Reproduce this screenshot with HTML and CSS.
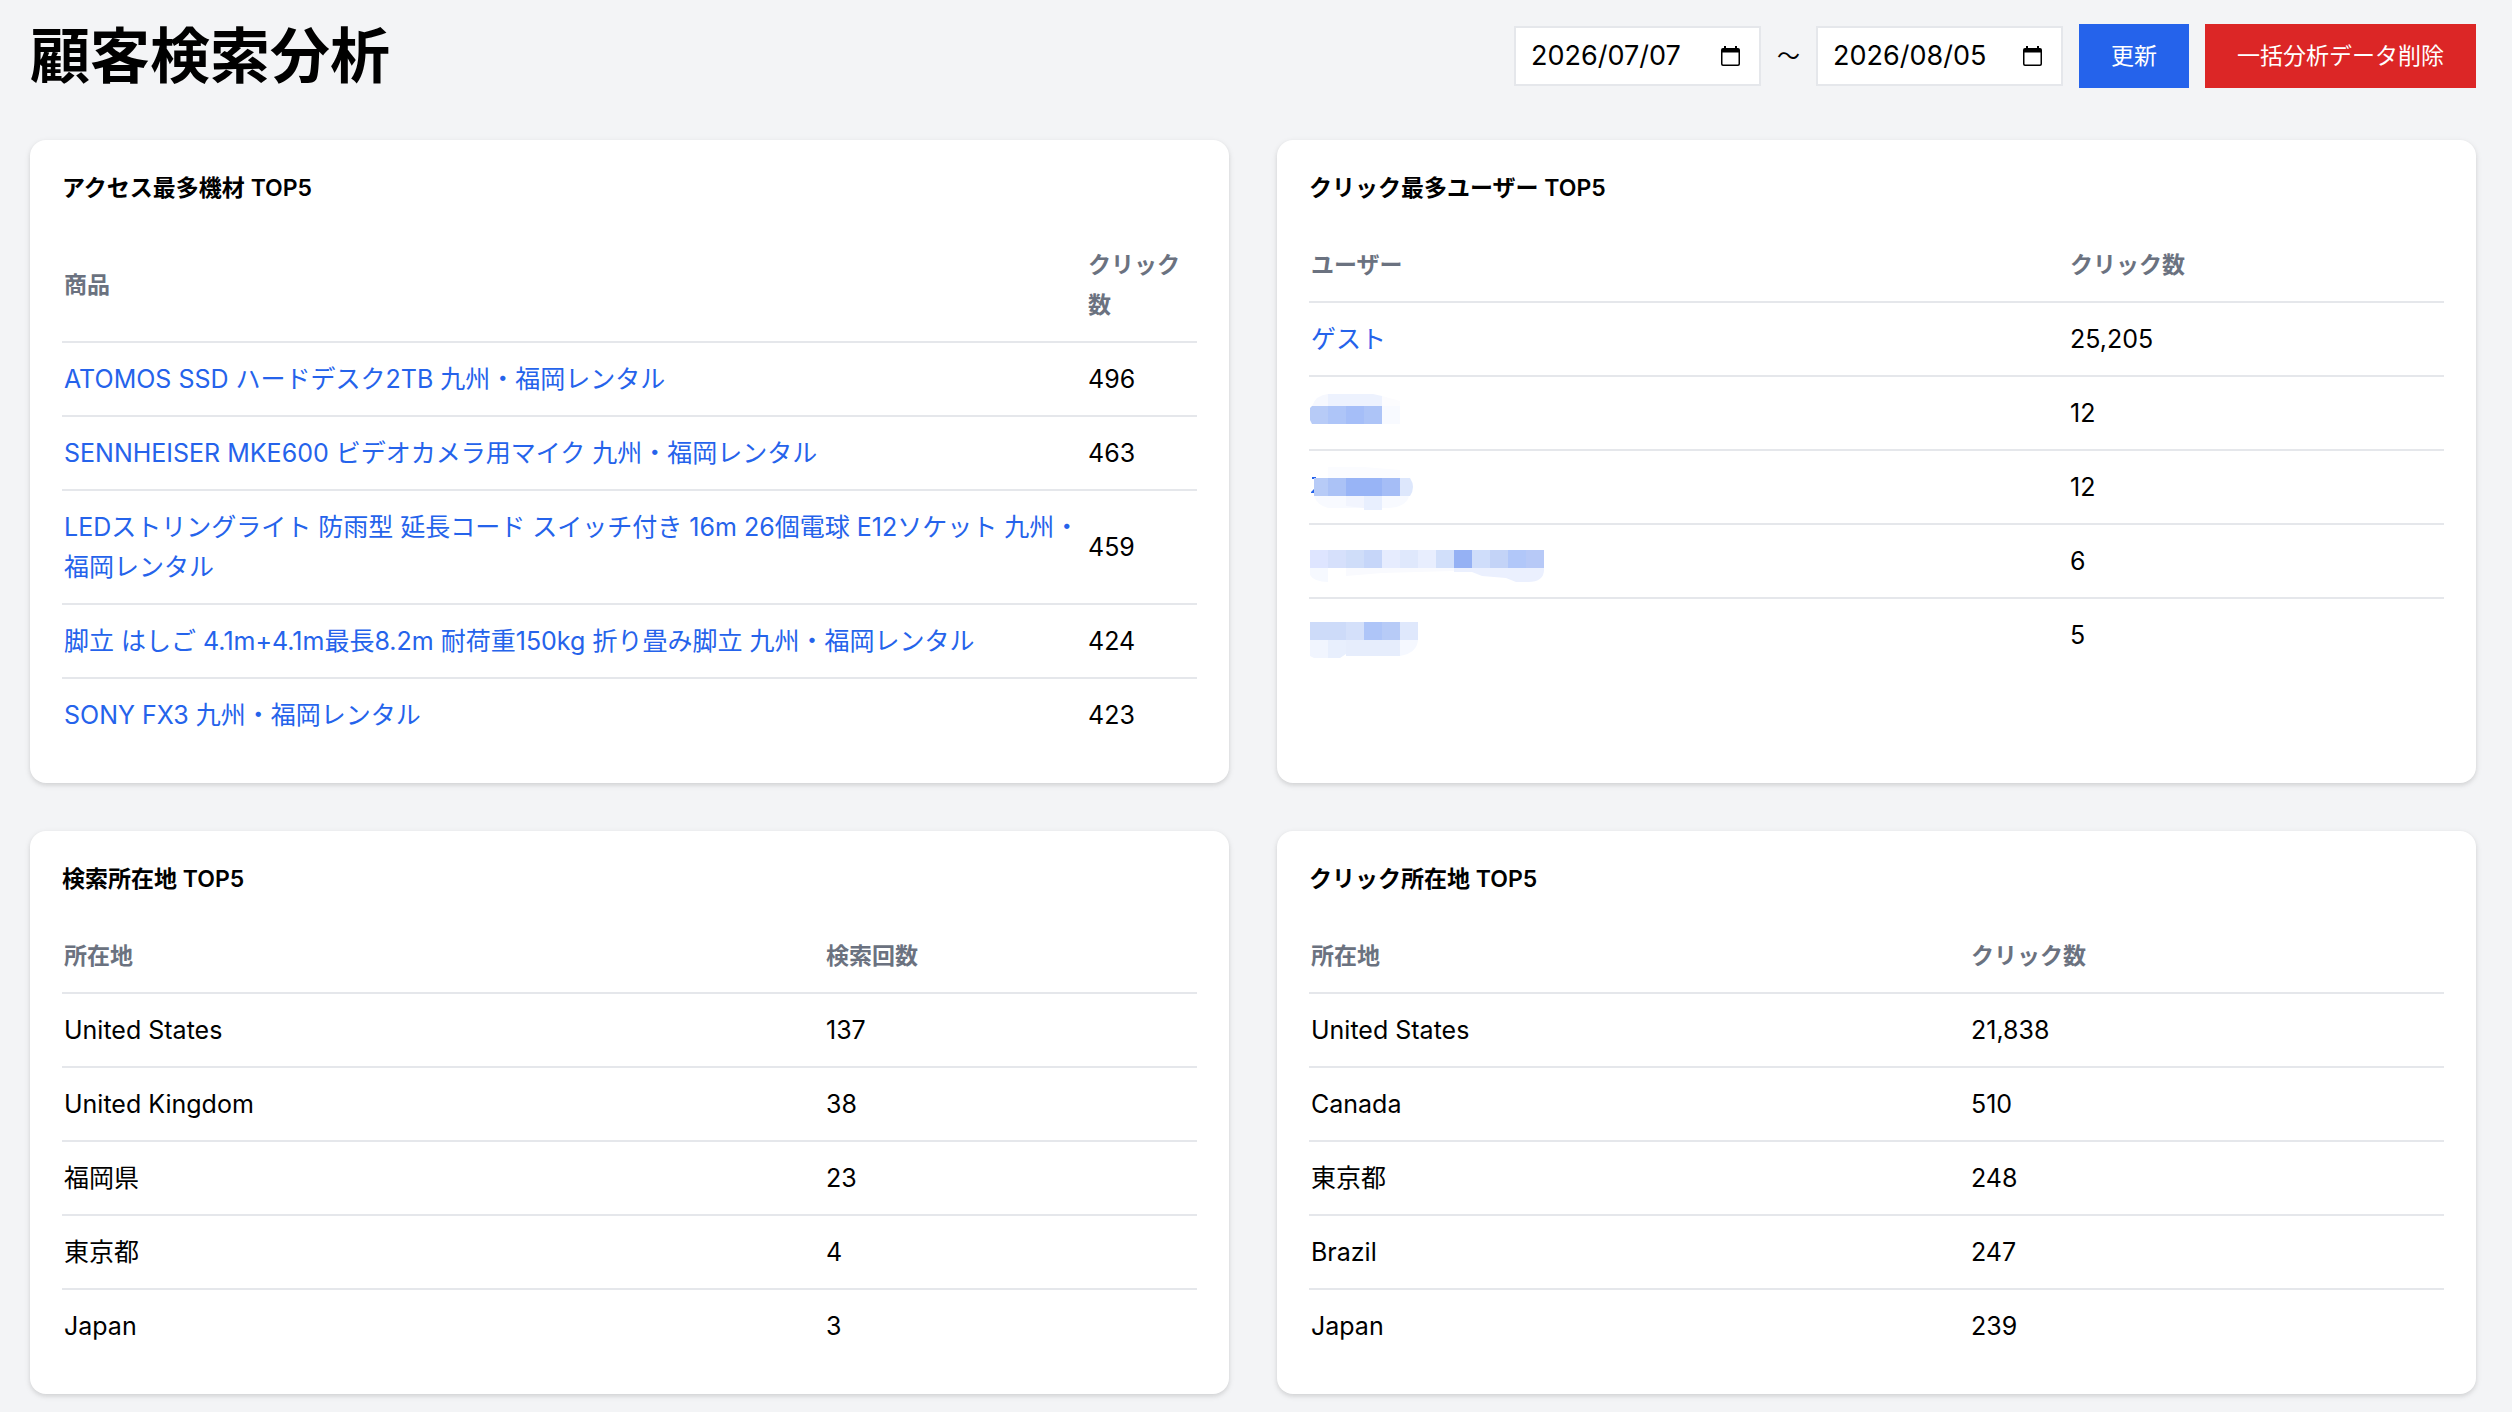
FILE: index.html
```html
<!DOCTYPE html>
<html lang="ja">
<head>
    <meta charset="UTF-8">
    <meta name="viewport" content="width=device-width, initial-scale=1.0">
    <title>顧客検索分析</title>
    <link rel="stylesheet" href="styles.css">
</head>
<body>
    <header class="page-header">
        <h1>顧客検索分析</h1>
        <form class="filter">
            <label class="date-field">
                <input type="text" name="from" value="2026/07/07" aria-label="開始日">
                <svg class="calendar" viewBox="0 0 19 20" aria-hidden="true">
                    <path fill-rule="evenodd" d="M3 0h2v2h9V0h2v2h1a2 2 0 0 1 2 2v14a2 2 0 0 1-2 2H2a2 2 0 0 1-2-2V4a2 2 0 0 1 2-2h1zM1.500 6.500v11.500l.5.5h15l.5-.5V6.500z"/>
                </svg>
            </label>
            <span class="tilde">〜</span>
            <label class="date-field">
                <input type="text" name="to" value="2026/08/05" aria-label="終了日">
                <svg class="calendar" viewBox="0 0 19 20" aria-hidden="true">
                    <path fill-rule="evenodd" d="M3 0h2v2h9V0h2v2h1a2 2 0 0 1 2 2v14a2 2 0 0 1-2 2H2a2 2 0 0 1-2-2V4a2 2 0 0 1 2-2h1zM1.500 6.500v11.500l.5.5h15l.5-.5V6.500z"/>
                </svg>
            </label>
            <button type="submit" class="btn">更新</button>
            <button type="button" class="btn btn-danger">一括分析データ削除</button>
        </form>
    </header>

    <main class="cards">
        <section class="card">
            <h3>アクセス最多機材 TOP5</h3>
            <table class="table-products">
                <thead>
                    <tr><th>商品</th><th class="count">クリック数</th></tr>
                </thead>
                <tbody>
                    <tr><td><a href="#">ATOMOS SSD ハードデスク2TB 九州・福岡レンタル</a></td><td>496</td></tr>
                    <tr><td><a href="#">SENNHEISER MKE600 ビデオカメラ用マイク 九州・福岡レンタル</a></td><td>463</td></tr>
                    <tr><td><a href="#">LEDストリングライト 防雨型 延長コード スイッチ付き 16m 26個電球 E12ソケット 九州・福岡レンタル</a></td><td>459</td></tr>
                    <tr><td><a href="#">脚立 はしご 4.1m+4.1m最長8.2m 耐荷重150kg 折り畳み脚立 九州・福岡レンタル</a></td><td>424</td></tr>
                    <tr><td><a href="#">SONY FX3 九州・福岡レンタル</a></td><td>423</td></tr>
                </tbody>
            </table>
        </section>

        <section class="card">
            <h3>クリック最多ユーザー TOP5</h3>
            <table class="table-users">
                <thead>
                    <tr><th>ユーザー</th><th class="count">クリック数</th></tr>
                </thead>
                <tbody>
                    <tr><td><a href="#">ゲスト</a></td><td>25,205</td></tr>
                    <tr>
                        <td>
                            <a href="#" aria-label="非表示ユーザー">
                                <svg class="mask" viewBox="0 0 240 40">
                                    <path fill="#f6f8fe" d="M1 13Q5 2 17 1v12z"/>
                                    <path fill="#edf2fe" d="M17 1h45l9 2v10H17z"/>
                                    <path fill="#fcfcfe" d="M71 3l18 5v5H71z"/>
                                    <path fill="#b7cbf7" d="M1 13h16v18H1l-2-4V15z"/>
                                    <path fill="#aec5f8" d="M17 13h18v18H17z"/>
                                    <path fill="#a5bef8" d="M35 13h18v18H35z"/>
                                    <path fill="#adc4f7" d="M53 13h18v18H53z"/>
                                    <path fill="#f8faff" d="M71 13h18v18H71z"/>
                                </svg>
                            </a>
                        </td>
                        <td>12</td>
                    </tr>
                    <tr>
                        <td>
                            <a href="#" aria-label="非表示ユーザー">
                                <svg class="mask" viewBox="0 0 240 40">
                                    <path fill="#2563eb" d="M1 10h4v2H1zM0 25l3-3v4H0z"/>
                                    <path fill="#fbfcff" d="M17 0h36l36 3v8H17z"/>
                                    <path fill="#f8faff" d="M3 29h95q-3 11-20 12H17Q6 38 3 29z"/>
                                    <path fill="#f2f5fe" d="M35 29h18v12l-18-2z"/>
                                    <path fill="#e8effe" d="M53 29h18v14H53z"/>
                                    <path fill="#b7cbf7" d="M3 11h14v18H3z"/>
                                    <path fill="#abc2f6" d="M17 11h18v18H17z"/>
                                    <path fill="#98b4f6" d="M35 11h36v18H35z"/>
                                    <path fill="#a5bdf6" d="M71 11h18v18H71z"/>
                                    <path fill="#dde7fc" d="M89 11h10q6 9 0 18H89z"/>
                                </svg>
                            </a>
                        </td>
                        <td>12</td>
                    </tr>
                    <tr>
                        <td>
                            <a href="#" aria-label="非表示ユーザー">
                                <svg class="mask" viewBox="0 0 240 40">
                                    <path fill="#f6f9ff" d="M-1 27h18v14Q3 41-1 34z"/>
                                    <path fill="#f9fafe" d="M35 27h108v3l-72 2-36 3z"/>
                                    <path fill="#ebf0fe" d="M143 27h90q1 14-16 14h-12l-10-4-24-2-10-4h-18z"/>
                                    <path fill="#dee5ff" d="M-1 9h18v18H-1z"/>
                                    <path fill="#d6e0fb" d="M17 9h18v18H17z"/>
                                    <path fill="#cfddf9" d="M35 9h18v18H35z"/>
                                    <path fill="#c6d6f9" d="M53 9h18v18H53z"/>
                                    <path fill="#e6ecfe" d="M71 9h18v18H71z"/>
                                    <path fill="#dfe8fc" d="M89 9h18v18H89z"/>
                                    <path fill="#e8eefe" d="M107 9h18v18h-18z"/>
                                    <path fill="#d1dffa" d="M125 9h18v18h-18z"/>
                                    <path fill="#95b1f4" d="M143 9h18v18h-18z"/>
                                    <path fill="#cfddfa" d="M161 9h18v18h-18z"/>
                                    <path fill="#c3d3f7" d="M179 9h18v18h-18z"/>
                                    <path fill="#b1c7f9" d="M197 9h18v18h-18z"/>
                                    <path fill="#b7c9f7" d="M215 9h18v18h-18z"/>
                                </svg>
                            </a>
                        </td>
                        <td>6</td>
                    </tr>
                    <tr>
                        <td>
                            <a href="#" aria-label="非表示ユーザー">
                                <svg class="mask" viewBox="0 0 240 40">
                                    <path fill="#f1f5fe" d="M-1 25h18v18H3l-4-2z"/>
                                    <path fill="#e8effd" d="M17 25h18v14l-6 4H17z"/>
                                    <path fill="#e6edfc" d="M35 25h54v16H35z"/>
                                    <path fill="#f5f8ff" d="M89 25h18q-1 13-18 16z"/>
                                    <path fill="#cddbf9" d="M-1 7h36v18H-1z"/>
                                    <path fill="#d4e0fa" d="M35 7h18v18H35z"/>
                                    <path fill="#aec5f8" d="M53 7h18v18H53z"/>
                                    <path fill="#b7cbf7" d="M71 7h18v18H71z"/>
                                    <path fill="#dfe8fc" d="M89 7h18v18H89z"/>
                                </svg>
                            </a>
                        </td>
                        <td>5</td>
                    </tr>
                </tbody>
            </table>
        </section>

        <section class="card">
            <h3>検索所在地 TOP5</h3>
            <table class="table-search">
                <thead>
                    <tr><th>所在地</th><th class="count">検索回数</th></tr>
                </thead>
                <tbody>
                    <tr><td>United States</td><td>137</td></tr>
                    <tr><td>United Kingdom</td><td>38</td></tr>
                    <tr><td>福岡県</td><td>23</td></tr>
                    <tr><td>東京都</td><td>4</td></tr>
                    <tr><td>Japan</td><td>3</td></tr>
                </tbody>
            </table>
        </section>

        <section class="card">
            <h3>クリック所在地 TOP5</h3>
            <table class="table-clicks">
                <thead>
                    <tr><th>所在地</th><th class="count">クリック数</th></tr>
                </thead>
                <tbody>
                    <tr><td>United States</td><td>21,838</td></tr>
                    <tr><td>Canada</td><td>510</td></tr>
                    <tr><td>東京都</td><td>248</td></tr>
                    <tr><td>Brazil</td><td>247</td></tr>
                    <tr><td>Japan</td><td>239</td></tr>
                </tbody>
            </table>
        </section>
    </main>
</body>
</html>
```
FILE: styles.css
```css
* {
    box-sizing: border-box;
}

body {
    font-family: Inter, "Noto Sans CJK JP", sans-serif;
    font-size: 25px;
    line-height: 40px;
    color: #000;
    background-color: #f3f4f6;
    margin: 0;
    padding: 24px 36px 18px 30px;
}

.page-header {
    display: flex;
    justify-content: space-between;
    align-items: center;
    height: 64px;
    margin-bottom: 52px;
}

h1 {
    margin: 0;
    font-size: 60px;
    line-height: 64px;
    font-weight: bold;
}

.filter {
    display: flex;
    align-items: center;
    gap: 16px;
}

.tilde {
    font-size: 23px;
}

.date-field {
    display: flex;
    align-items: center;
    justify-content: space-between;
    width: 247px;
    height: 60px;
    padding: 0 19px 0 15px;
    background: #fff;
    border: 2px solid #e5e7eb;
}

.date-field input {
    width: 170px;
    padding: 0;
    border: 0;
    outline: 0;
    background: none;
    font: inherit;
    font-size: 27px;
    color: #000;
}

.calendar {
    width: 19px;
    height: 20px;
}

.btn {
    height: 64px;
    padding: 0 32px;
    border: 0;
    background: #2563eb;
    color: #fff;
    font: inherit;
    font-size: 23px;
    cursor: pointer;
}

.btn-danger {
    background: #dc2626;
}

.cards {
    display: grid;
    grid-template-columns: 1fr 1fr;
    gap: 48px;
}

.card {
    background: #fff;
    border-radius: 16px;
    padding: 32px;
    box-shadow: 0 2px 6px rgba(0, 0, 0, 0.1), 0 2px 4px rgba(0, 0, 0, 0.06);
}

h3 {
    margin: 0 0 24px;
    font-size: 23px;
    line-height: 33px;
    font-weight: 600;
}

table {
    width: 100%;
    table-layout: fixed;
    border-collapse: separate;
    border-spacing: 0;
}

th, td {
    padding: 16px 2px;
    text-align: left;
    border-bottom: 2px solid #e5e7eb;
}

th {
    font-size: 23px;
    font-weight: bold;
    color: #6b7280;
}

tbody tr:last-child td {
    border-bottom: 0;
}

.table-products .count {
    width: 111px;
}

.table-users .count {
    width: 376px;
}

.table-search .count {
    width: 373px;
}

.table-clicks .count {
    width: 475px;
}

a {
    color: #2563eb;
    text-decoration: none;
}

/* pixelated user names */
.mask {
    display: block;
    width: 240px;
    height: 40px;
    overflow: visible;
}
```
